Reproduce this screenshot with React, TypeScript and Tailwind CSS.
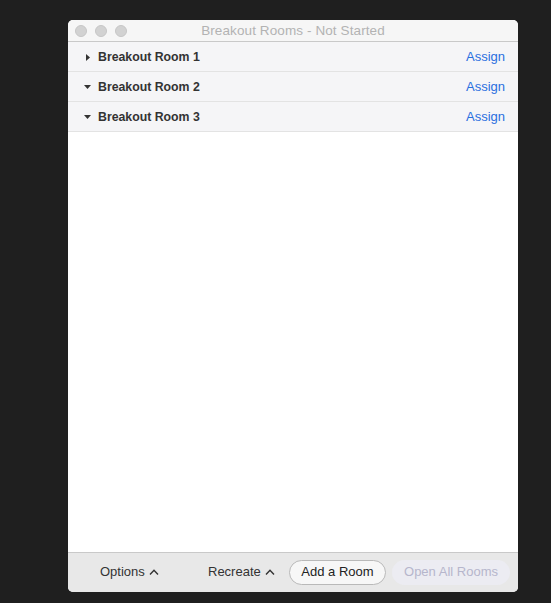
const rooms = [
  { name: 'Breakout Room 1', open: false },
  { name: 'Breakout Room 2', open: true },
  { name: 'Breakout Room 3', open: true },
]

function Caret({ open }: { open: boolean }) {
  return open ? (
    <svg width="7" height="4" viewBox="0 0 7 4" className="ml-[16px] fill-[#333]">
      <path d="M0 0h7L3.5 4z" />
    </svg>
  ) : (
    <svg width="4" height="7" viewBox="0 0 4 7" className="ml-[18px] fill-[#333]">
      <path d="M0 0l4 3.5L0 7z" />
    </svg>
  )
}

function Chevron() {
  return (
    <svg width="10" height="6" viewBox="0 0 10 6" className="ml-[4px] fill-none stroke-[#333]">
      <path d="M1 5.5L5 1.2l4 4.3" strokeWidth="1.4" />
    </svg>
  )
}

export default function App() {
  return (
    <div className="min-h-[603px] w-full bg-[#1f1f1f] pt-[20px] pl-[68px] font-['Liberation_Sans',sans-serif]">
      <div className="flex h-[572px] w-[450px] flex-col overflow-hidden rounded-[5px] bg-white">
        <div className="relative flex h-[22px] items-center border-b border-[#c9c9c9] bg-[#f6f6f6]">
          <div className="absolute left-[7px] top-[5px] flex gap-[8px]">
            <span className="h-[12px] w-[12px] rounded-full border border-[#c6c6c6] bg-[#d2d2d2]" />
            <span className="h-[12px] w-[12px] rounded-full border border-[#c6c6c6] bg-[#d2d2d2]" />
            <span className="h-[12px] w-[12px] rounded-full border border-[#c6c6c6] bg-[#d2d2d2]" />
          </div>
          <p className="w-full pt-[1px] text-center text-[13.5px] tracking-[0.1px] text-[#b3b3b3]">
            Breakout Rooms - Not Started
          </p>
        </div>

        {rooms.map((room) => (
          <div
            key={room.name}
            className="flex h-[30px] items-center border-b border-[#e3e3e3] bg-[#f5f5f7] pt-[1px] pr-[13px]"
          >
            <div className="flex w-[30px] items-center">
              <Caret open={room.open} />
            </div>
            <p className="flex-1 text-[12.3px] font-bold text-[#333]">{room.name}</p>
            <p className="text-[13px] text-[#2a6fdf]">Assign</p>
          </div>
        ))}

        <div className="flex-1 bg-white" />

        <div className="flex h-[40px] items-center border-t border-[#c9c9c9] bg-[#e8e8e8] pb-[1px] pl-[32px]">
          <button className="flex w-[108px] items-center text-[13px] text-[#333]">
            Options <Chevron />
          </button>
          <button className="flex w-[81px] items-center text-[13px] text-[#333]">
            Recreate <Chevron />
          </button>
          <button className="h-[25px] w-[97px] rounded-full border border-[#b9b9b9] bg-[#f7f7f7] text-[13px] text-[#222]">
            Add a Room
          </button>
          <button className="ml-[6px] h-[25px] w-[118px] rounded-full bg-[#ececf2] text-[13px] text-[#b6b6cc]">
            Open All Rooms
          </button>
        </div>
      </div>
    </div>
  )
}
